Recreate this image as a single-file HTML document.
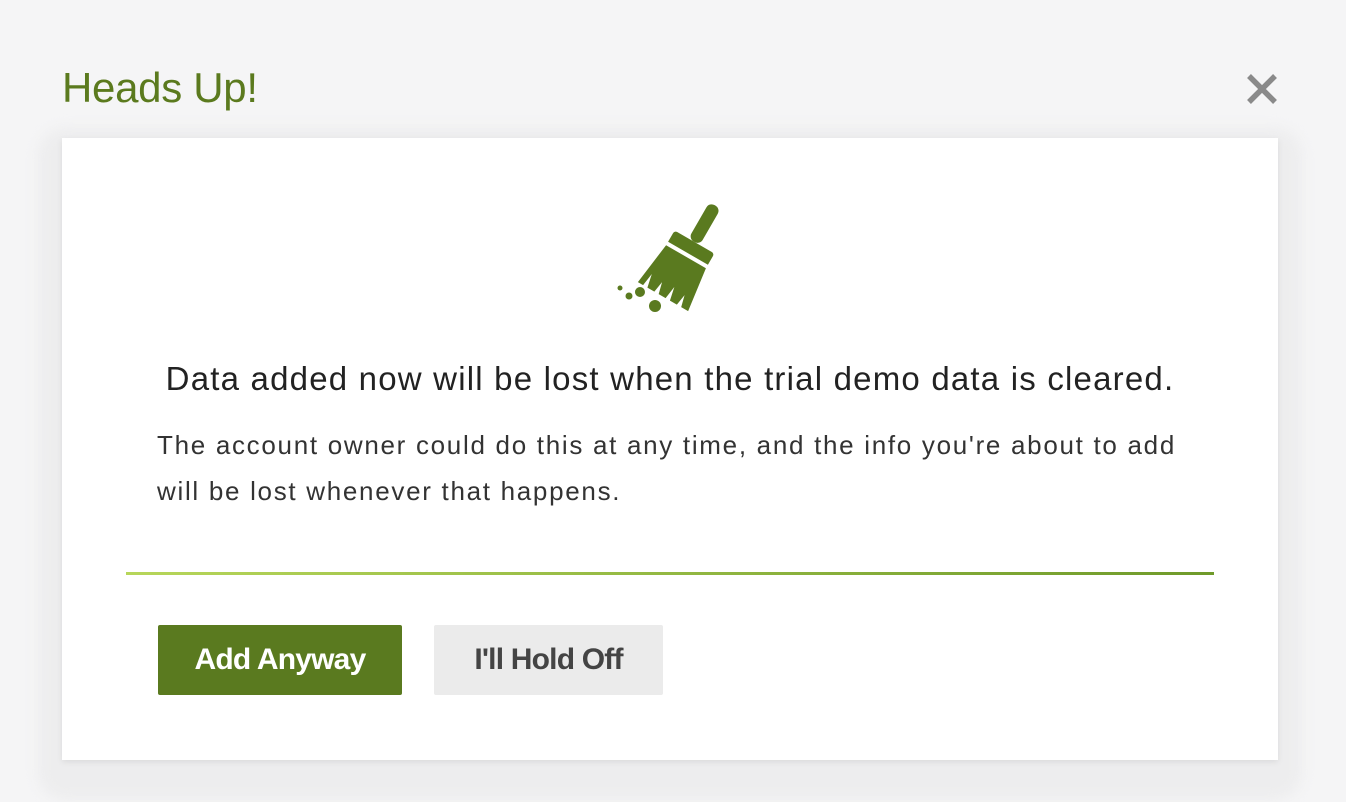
<!DOCTYPE html>
<html><head><style>
body{margin:0;width:1346px;height:802px;background:#f5f5f6;font-family:"Liberation Sans",sans-serif;position:relative;overflow:hidden}
h1{position:absolute;left:62px;top:64px;margin:0;font-weight:normal;font-size:42px;color:#5b7a1e;letter-spacing:-0.3px}
.x{position:absolute;left:1245px;top:72px;width:34px;height:34px}
.shadow{position:absolute;left:38px;top:128px;width:1264px;height:672px;background:#ededee;border-radius:28px;filter:blur(6px)}
.card{position:absolute;left:62px;top:138px;width:1216px;height:622px;background:#fff;box-shadow:0 2px 6px rgba(0,0,0,.08)}
.t1{position:absolute;left:0;width:1216px;top:222px;text-align:center;font-size:33px;letter-spacing:1.2px;color:#222;margin:0;white-space:nowrap}
.t2{position:absolute;left:95px;top:284px;width:1100px;font-size:26px;letter-spacing:1.7px;line-height:46px;color:#333;margin:0;white-space:nowrap}
.hr{position:absolute;left:64px;top:434px;width:1088px;height:3px;background:linear-gradient(90deg,#b7d65a,#6f9a2a)}
.b{position:absolute;top:487px;height:70px;line-height:70px;text-align:center;font-weight:bold;font-size:30px;border-radius:2px;letter-spacing:-0.8px}
.b1{left:96px;width:244px;background:#5a7a1f;color:#fff}
.b2{left:372px;width:229px;background:#ebebeb;color:#444}
</style></head><body>
<h1>Heads Up!</h1>
<svg class="x" viewBox="0 0 34 34"><path d="M4 4L30 30M30 4L4 30" stroke="#8a8a8a" stroke-width="5.5"/></svg>
<div class="shadow"></div>
<div class="card">
<svg style="position:absolute;left:538px;top:60px" width="130" height="120" viewBox="600 198 130 120">
<g fill="#5a7a1f">
<g transform="translate(-8,0) rotate(30 695 255)">
<rect x="688" y="198" width="13" height="42" rx="6"/>
<path d="M675 240h40a3 3 0 0 1 3 3v10h-46v-10a3 3 0 0 1 3-3z"/>
<path d="M672 257h46l6 46h-8l-3-12-2 12h-8l-3-14-2 14h-8l-3-12-2 12h-8l-3-14-2 14h-6z"/>
</g>
<circle cx="655" cy="306" r="6"/>
<circle cx="640" cy="292" r="5"/>
<circle cx="629" cy="296" r="3.5"/>
<circle cx="620" cy="288" r="2.5"/>
</g></svg>
<p class="t1">Data added now will be lost when the trial demo data is cleared.</p>
<p class="t2">The account owner could do this at any time, and the info you're about to add<br>will be lost whenever that happens.</p>
<div class="hr"></div>
<div class="b b1">Add Anyway</div>
<div class="b b2">I'll Hold Off</div>
</div>
</body></html>
